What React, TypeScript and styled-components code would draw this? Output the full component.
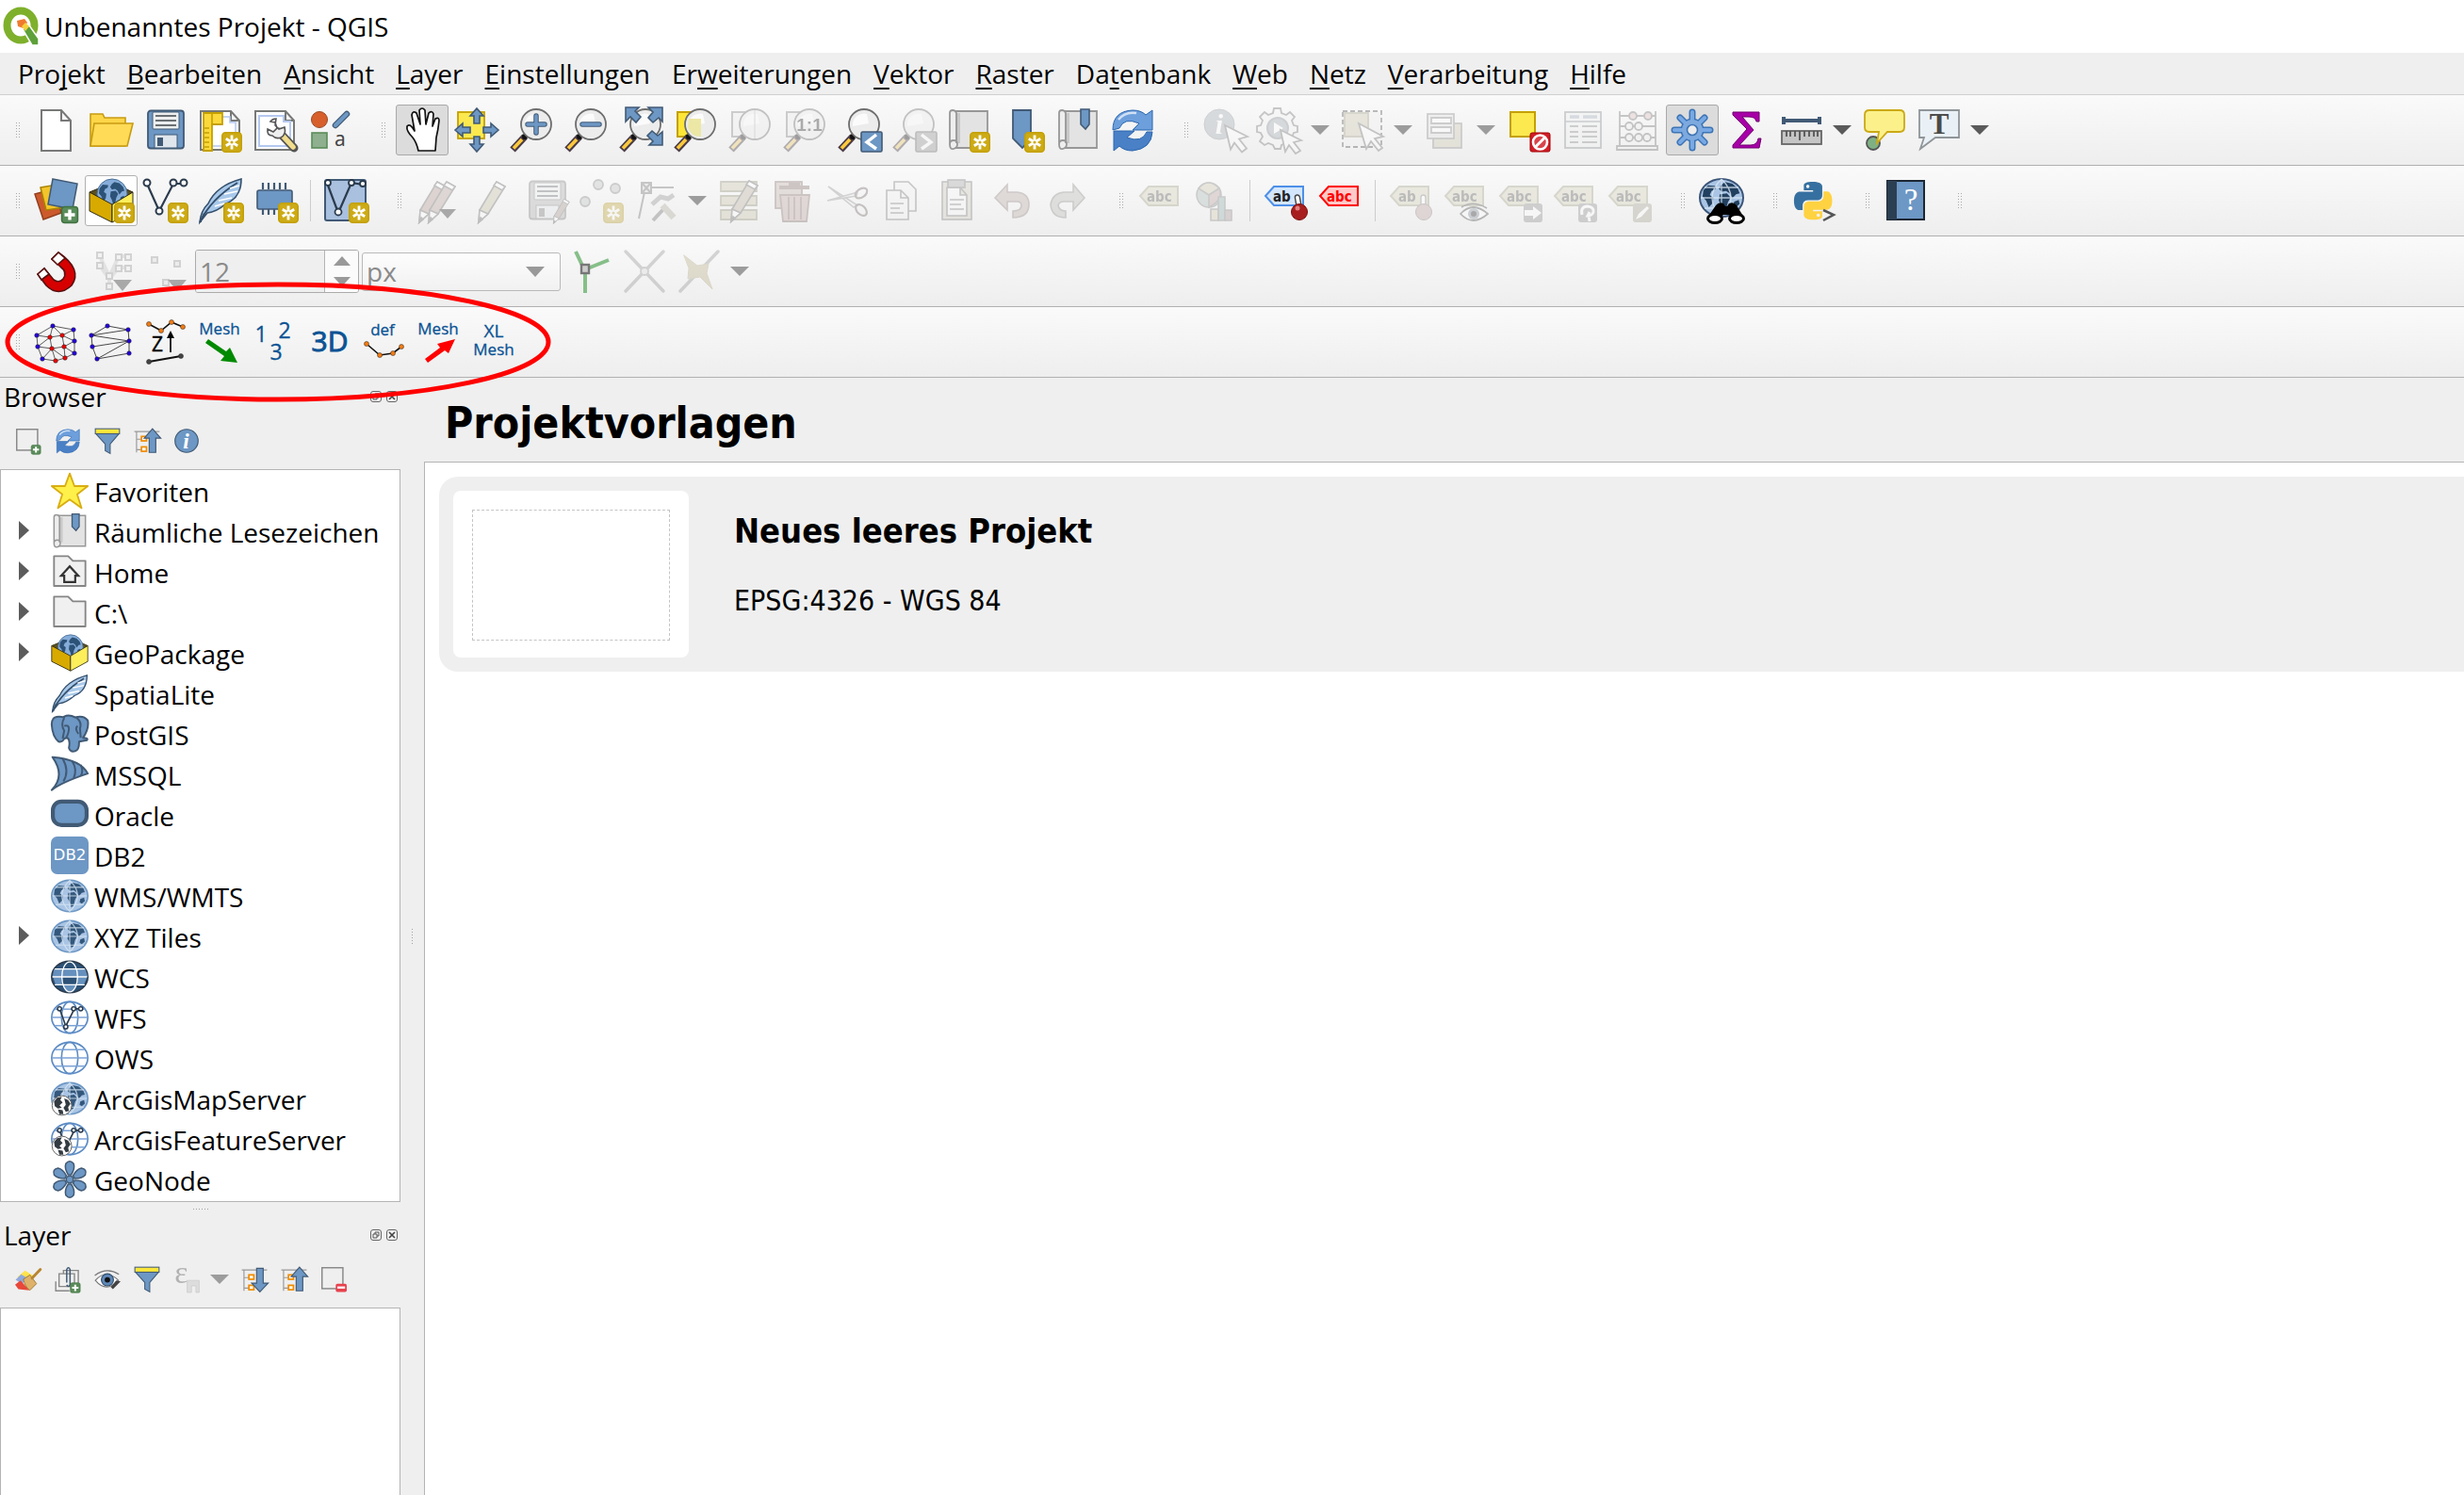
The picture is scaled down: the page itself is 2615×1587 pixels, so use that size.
import React from "react";
import styled, { createGlobalStyle, css } from "styled-components";

const UI_FONT = '"Open Sans", "Noto Sans", sans-serif';
const HEAD_FONT = '"DejaVu Sans Condensed", "DejaVu Sans", sans-serif';

const C = {
  blue: "#6d97c4",
  navy: "#415a75",
  deep: "#2b3b4d",
  gold: "#c4a000",
  panel: "#efefef",
  line: "#b4b4b4",
};

const GlobalStyle = createGlobalStyle`
  * { box-sizing: border-box; }
  body { margin: 0; background: ${C.panel}; color: #000; font-family: ${UI_FONT}; font-size: 28px; }
  button, input, select { font: inherit; color: inherit; }
`;

/* ---------- drawings (48 x 48 grid) ---------- */

const Badge = ({ x = 25, y = 26 }: { x?: number; y?: number }) => (
  <g transform={`translate(${x} ${y})`}>
    <rect x="0.8" y="0.8" width="20.4" height="20.4" rx="3.5" fill="#cdab16" stroke="#c4a000" strokeWidth="1.6" />
    <path d="M11 3.5v15M4.8 7.2l12.4 7.6M17.2 7.2L4.8 14.8" stroke="#fff" strokeWidth="2.8" />
    <circle cx="11" cy="11" r="1.6" fill="#cdab16" />
  </g>
);

const PlusBadge = ({ x = 28, y = 29, s = 18 }: { x?: number; y?: number; s?: number }) => (
  <g transform={`translate(${x} ${y}) scale(${s / 18})`}>
    <rect x="0.5" y="0.5" width="17" height="17" rx="3" fill="#5a8c5a" stroke="#3f7240" />
    <path d="M9 3.5v11M3.5 9h11" stroke="#fff" strokeWidth="3.4" />
  </g>
);

const Lens = ({ children }: { children?: React.ReactNode }) => (
  <g>
    <path d="M4 45L17 31" stroke="#4a3b47" strokeWidth="7.5" />
    <path d="M5 43.5L14 34" stroke="#fcc93c" strokeWidth="3.6" />
    <circle cx="17" cy="31" r="3" fill="#111" />
    <circle cx="29" cy="18" r="16" fill="#ececec" stroke="#6e6e6e" strokeWidth="1.8" />
    <path d="M17 20a12 12 0 0 1 15-13l2 10z" fill="#fff" opacity="0.8" />
    {children}
  </g>
);

const Cursor = () => (
  <path d="M24 19l24 12-9 2.5 8 10-5 4-8-10-4 7z" fill="#fff" stroke="#777" strokeWidth="1.8" />
);

const Sheet = () => (
  <path d="M3 4h32l9 10v31H3zM35 4v10h9" fill="#fff" stroke="#777977" strokeWidth="2" />
);

const TagShape = ({ fill, stroke, text, ink }: { fill: string; stroke: string; text: string; ink: string }) => (
  <g>
    <path d="M3 19l9-10h31v20H12z" fill={fill} stroke={stroke} strokeWidth="2" />
    <text x={text === "ab" ? 11 : 10} y="25" fontFamily="DejaVu Sans Condensed, DejaVu Sans" fontWeight="700" fontSize="15" fill={ink}>
      {text}
    </text>
  </g>
);

const GreyTag = ({ text = "abc" }: { text?: string }) => (
  <TagShape fill="#d8d3b0" stroke="#a9a583" text={text} ink="#5e5e5e" />
);

const Continents = ({ fill = "#2d5277" }: { fill?: string }) => (
  <path
    fill={fill}
    d="M4 15l5-6 9 1-1 4-4 2-2 5 4 3-1 7-4 5-3-8-4-5zM24 8l4-3 8 2 6 6 2 6-4 1-4 5-3-6-4-3-5 1-3-4zM22 20l8-1 4 5-3 6-2 9-3 2-2-7-3-6zM38 29l5-2 1 5-4 4-3-2z"
  />
);

const Globe = ({ dark = false }: { dark?: boolean }) => (
  <g>
    <ellipse cx="24" cy="24" rx="23" ry="20" fill="#a9c4e4" stroke={dark ? "#3b5578" : "#6d97c4"} strokeWidth="2" />
    <g transform="translate(1 3) scale(.96 .86)">
      <Continents fill={dark ? "#22405f" : "#34587c"} />
    </g>
    <path d="M2 24h44M6 13h36M6 35h36M24 4v40M24 4q-20 20 0 40M24 4q20 20 0 40" fill="none" stroke="#dbe8f5" strokeWidth="1.3" opacity="0.8" />
  </g>
);

const WireGlobe = () => (
  <g fill="none" stroke="#5c8bc4" strokeWidth="2">
    <ellipse cx="24" cy="24" rx="23" ry="20" fill="#fff" />
    <ellipse cx="24" cy="24" rx="10.5" ry="20" />
    <path d="M5 13.5h38M1 24h46M5 34.5h38" stroke="#7da3d6" />
  </g>
);

const TinyGlobe = () => (
  <g>
    <circle cx="14" cy="33" r="12.5" fill="#fff" stroke="#666" strokeWidth="1.2" />
    <path d="M4 28l4-5 6-1-2 4 3 3-4 4 3 3-5 1-4-3zM17 24l5 2 3 5-3 4 1 5-4 1-3-5 3-4zM9 38l6 1 1 5-5 0z" fill="#333b42" />
  </g>
);

const VNodes = () => (
  <g>
    <path d="M11 13l8 22 11-22h8" fill="none" stroke={C.deep} strokeWidth="2" />
    <g fill="#fff" stroke={C.deep} strokeWidth="1.8">
      <circle cx="11" cy="13" r="2.6" />
      <circle cx="19" cy="36" r="2.6" />
      <circle cx="29" cy="13" r="2.6" />
      <circle cx="38" cy="13" r="2.6" />
    </g>
  </g>
);

const Pencil = ({ x = 0, y = 0, body = "#c9c39c" }: { x?: number; y?: number; body?: string }) => (
  <g transform={`translate(${x} ${y})`} stroke="#6f6f6f" strokeWidth="1.6">
    <path d="M10 34L28 4l9 5-18 29-10 9z" fill={body} />
    <path d="M28 4l9 5-3 4-9-5zM10 34l9 4-10 9z" fill="#fff" />
    <path d="M11 42l-2 5 4-3z" fill="#555" />
  </g>
);

const Floppy = ({ main = C.blue, edge = C.navy }: { main?: string; edge?: string }) => (
  <g>
    <rect x="5" y="3.5" width="38" height="40" rx="3" fill={main} stroke={edge} strokeWidth="1.8" />
    <rect x="10" y="5" width="28" height="18" rx="1" fill="#eceeef" stroke={edge} />
    <path d="M13 9h22M13 14h22M13 19h22" stroke="#6a6f73" strokeWidth="2" />
    <rect x="12" y="29" width="24" height="14" fill="#dfe6ec" stroke={edge} />
    <rect x="15" y="32" width="6" height="9" fill={edge} />
  </g>
);

const MapScroll = () => (
  <g stroke="#979797" strokeWidth="1.8">
    <path d="M6 4h38v39H8z" fill="#e3e3e3" />
    <path d="M10 6h5v32h-5z" fill="#c8c8c8" stroke="none" />
    <path d="M4 40V6q0-3 3-3t4 3v32M4 39q0-4 4-4t4 4-4 5-4-5z" fill="#eee" />
  </g>
);

const Refresh = () => (
  <g stroke="#2b66ae" strokeWidth="1">
    <path d="M3 24Q3 4 24 3q9 0 14 5l7-5v21H24l7-7Q15 10 10 22z" fill="#6d9fdc" />
    <path d="M45 26q-1 18-21 20-9 0-14-5l-6 5V25h22l-8 7q16 6 21-6z" fill="#4a80c6" />
    <path d="M9 13Q16 4 28 6" stroke="#cfe0f4" strokeWidth="2.5" fill="none" />
  </g>
);

const Arrow4 = () => (
  <g>
    <rect x="4" y="5" width="28" height="28" fill="#fce94f" stroke={C.gold} strokeWidth="1.8" />
    <path
      d="M24 1l7 8h-4v8h-6V9h-4zM24 47l7-8h-4v-8h-6v8h-4zM1 24l8-7v4h8v6H9v4zM47 24l-8-7v4h-8v6h8v4z"
      fill={C.blue}
      stroke={C.navy}
      strokeWidth="1.6"
    />
  </g>
);

const Feather = () => (
  <g>
    <path d="M2 47q1-12 9-20Q20 8 46 1q0 20-16 26-10 9-20 10z" fill="#a9c9ea" stroke="#35506d" strokeWidth="1.6" />
    <path d="M2 47Q14 22 42 5" stroke="#35506d" strokeWidth="2" fill="none" />
    <path d="M18 30l10-3M22 24l14-3M28 17l14-3M34 11l10-3" stroke="#fff" strokeWidth="1.6" />
    <path d="M2 47q2-6 4-10l2 2q-4 3-4 8z" fill="#35506d" />
  </g>
);

const GeoPackage = () => (
  <g stroke="#2d2a14" strokeWidth="1">
    <path d="M1 15L25 5l22 10-22 15z" fill="#5c5020" />
    <circle cx="25" cy="17" r="16" fill="#86add9" stroke="#4a6e98" />
    <g transform="translate(9 1) scale(.66)" stroke="none">
      <Continents />
    </g>
    <path d="M1 15l24 13v19L1 35z" fill="#d8aa00" />
    <path d="M47 15L25 28v19l22-12z" fill="#fdee5c" />
  </g>
);

const Bars = ({ up }: { up: boolean }) => (
  <g>
    <path d="M1 7h46M5 7v38M5 21h12M5 40h12" stroke="#999" strokeWidth="2" fill="none" />
    <rect x="14" y="16" width="9" height="8" fill="#fff" stroke="#f08c00" strokeWidth="3" />
    <rect x="14" y="35" width="9" height="8" fill="#fff" stroke="#f08c00" strokeWidth="3" />
    <path
      d={up ? "M34 2l15 17h-9v26H28V19h-9z" : "M34 47l15-16h-9V4H28v27h-9z"}
      fill={C.blue}
      stroke={C.navy}
      strokeWidth="2"
    />
  </g>
);

const Funnel = () => (
  <g stroke={C.navy} strokeWidth="1.8">
    <path d="M3 11h42L29 30v17l-9-5V30z" fill={C.blue} />
    <rect x="2" y="2" width="44" height="9" fill="#fbe73a" />
  </g>
);

const meshBlue: [number, number][] = [[20, 7], [42, 11], [3, 17], [43, 23], [4, 29], [43, 36], [9, 42]];
const meshRed: [number, number][] = [[17, 19], [30, 17], [19, 31], [32, 29], [23, 44], [33, 41]];

const Dots = ({ pts, fill, r = 2 }: { pts: [number, number][]; fill: string; r?: number }) => (
  <g fill={fill} stroke="#222" strokeWidth="0.5">
    {pts.map(([x, y]) => (
      <circle key={`${x}-${y}`} cx={x} cy={y} r={r} />
    ))}
  </g>
);

const MeshText = ({ x, y, size, children }: { x: number; y: number; size: number; children: string }) => (
  <text x={x} y={y} textAnchor="middle" fontFamily="Open Sans, Noto Sans" fontSize={size} fill="#0b5394" stroke="#0b5394" strokeWidth="0.3">
    {children}
  </text>
);

const Folder = () => (
  <path d="M4 4h18l6 6h16v32H4z" fill="#f0f0f0" stroke="#858585" strokeWidth="2.2" strokeLinejoin="round" />
);

const PYTHON_HALF =
  "M14.25.18l.9.2.73.26.59.3.45.32.34.34.25.34.16.33.1.3.04.26.02.2-.01.13V8.5l-.05.63-.13.55-.21.46-.26.38-.3.31-.33.25-.35.19-.35.14-.33.1-.3.07-.26.04-.21.02H8.77l-.69.05-.59.14-.5.22-.41.27-.33.32-.27.35-.2.36-.15.37-.1.35-.07.32-.04.27-.02.21v3.06H3.17l-.21-.03-.28-.07-.32-.12-.35-.18-.36-.26-.36-.36-.35-.46-.32-.59-.28-.73-.21-.88-.14-1.05-.05-1.23.06-1.22.16-1.04.24-.87.32-.71.36-.57.4-.44.42-.33.42-.24.4-.16.36-.1.32-.05.24-.01h.16l.06.01h8.16v-.83H6.18l-.01-2.75-.02-.37.05-.34.11-.31.17-.28.25-.26.31-.23.38-.2.44-.18.51-.15.58-.12.64-.1.71-.06.77-.04.84-.02 1.27.05zm-6.3 1.98l-.23.33-.08.41.08.41.23.34.33.22.41.09.41-.09.33-.22.23-.34.08-.41-.08-.41-.23-.33-.33-.22-.41-.09-.41.09z";

const icons: Record<string, React.ReactNode> = {
  newFile: <path d="M8 3h21l10 11v32H8zM29 3v11h10" fill="#fff" stroke="#777977" strokeWidth="2" />,
  open: (
    <g fill="#fdd549" stroke="#c79b12" strokeWidth="1.6">
      <path d="M2 7h13l2 4h22v30H2z" />
      <path d="M6 17h41l-6 24H2z" fill="#ffdb57" />
    </g>
  ),
  save: <Floppy />,
  layout: (
    <g>
      <Sheet />
      <path d="M8 10h26v6h6v25H8z" fill="none" stroke="#b4c8ef" strokeWidth="1.5" />
      <path d="M6 6h20v12H15v28H6z" fill="#fbd93c" stroke={C.gold} strokeWidth="1.8" />
      <path d="M7 22h5M7 27h5M7 32h5M7 37h5M7 42h5M15 7v10" stroke={C.gold} strokeWidth="1.6" />
      <Badge />
    </g>
  ),
  layoutManager: (
    <g>
      <Sheet />
      <path d="M7 9h26v6h7v26H7z" fill="none" stroke="#b4c8ef" strokeWidth="2" />
      <path d="M44 43L28 26" stroke="#555" strokeWidth="9" strokeLinecap="round" />
      <path d="M43 42L31 29" stroke="#f0dc8a" strokeWidth="5.5" strokeLinecap="round" />
      <path d="M25 12l-1 7 4 4 6-2q2 8-4 11-5 2-9-2-6 0-5-7l6 3 4-4-2-6-5-1q2-3 6-3z" fill="#eee" stroke="#555" strokeWidth="1.6" />
    </g>
  ),
  style: (
    <g>
      <circle cx="13" cy="13" r="8.5" fill="#d75f2b" stroke="#9a4a24" />
      <path d="M30 19L42 7" stroke={C.navy} strokeWidth="6.5" strokeLinecap="round" />
      <path d="M30 19L42 7" stroke={C.blue} strokeWidth="4" strokeLinecap="round" />
      <rect x="5" y="27" width="16" height="16" fill="#8eb08e" stroke="#5a8c5a" strokeWidth="1.6" />
      <text x="29" y="41" fontFamily="Noto Sans" fontSize="21" fill="#444">a</text>
    </g>
  ),
  pan: (
    <path
      d="M20 46q-2-9-6-14-7-7-6-12 3-4 8 5l-3-17q1-5 5-2l4 12-1-15q3-4 6 0l1 15 3-12q4-3 5 1l-1 13 3-8q4-2 4 2-1 10-3 18l-1 14z"
      fill="#fff"
      stroke="#111"
      strokeWidth="1.7"
      strokeLinejoin="round"
    />
  ),
  panSel: <Arrow4 />,
  zoomIn: (
    <Lens>
      <path d="M29 9v18M20 18h18" stroke={C.navy} strokeWidth="5.5" strokeLinecap="round" />
      <path d="M29 9v18M20 18h18" stroke={C.blue} strokeWidth="3.5" strokeLinecap="round" />
    </Lens>
  ),
  zoomOut: (
    <Lens>
      <path d="M20 18h18" stroke={C.navy} strokeWidth="5.5" strokeLinecap="round" />
      <path d="M20 18h18" stroke={C.blue} strokeWidth="3.5" strokeLinecap="round" />
    </Lens>
  ),
  zoomFull: (
    <Lens>
      <path
        d="M8 0h14l-4 4 6 6-5 6-6-6-5 5zM47 0v15l-4-4-6 5-5-5 5-6-5-5zM47 40H33l4-4-6-6 5-5 6 5 5-4z"
        fill={C.blue}
        stroke={C.navy}
        strokeWidth="1.6"
      />
    </Lens>
  ),
  zoomSel: (
    <g>
      <rect x="5" y="5" width="24" height="26" fill="#ffe636" stroke={C.gold} strokeWidth="2" />
      <Lens><path d="M17 12h13v19q-11 0-14-10z" fill="#ece7a4" /></Lens>
    </g>
  ),
  zoomLayer: (
    <g>
      <rect x="5" y="5" width="24" height="26" fill="#eee" stroke="#888" strokeWidth="2" />
      <Lens><path d="M29 3v30" stroke="#aaa" /></Lens>
    </g>
  ),
  zoomNative: (
    <g>
      <rect x="5" y="5" width="24" height="26" fill="#eee" stroke="#888" strokeWidth="2" />
      <Lens>
        <text x="29" y="25" textAnchor="middle" fontFamily="Liberation Sans" fontWeight="700" fontSize="19" fill="#333">1:1</text>
      </Lens>
    </g>
  ),
  zoomLast: (
    <Lens>
      <rect x="26" y="26" width="22" height="21" rx="1.5" fill={C.blue} stroke={C.navy} strokeWidth="1.6" />
      <path d="M42 29l-10 8 10 7" fill="none" stroke="#fff" strokeWidth="3.4" />
    </Lens>
  ),
  zoomNext: (
    <Lens>
      <rect x="26" y="26" width="22" height="21" rx="1.5" fill="#999" stroke="#666" strokeWidth="1.6" />
      <path d="M32 29l10 8-10 7" fill="none" stroke="#fff" strokeWidth="3.4" />
    </Lens>
  ),
  newMap: <g><MapScroll /><Badge /></g>,
  newBookmark: (
    <g transform="translate(6 0)">
      <path d="M7 3h19v31l-9 9-10-10z" fill={C.blue} stroke={C.navy} strokeWidth="1.8" />
      <Badge x={19} />
    </g>
  ),
  bookmarks: (
    <g>
      <MapScroll />
      <path d="M27 2h9v16l-4 5-5-5z" fill={C.blue} stroke={C.navy} strokeWidth="1.6" />
    </g>
  ),
  refresh: <Refresh />,
  identify: (
    <g>
      <circle cx="18" cy="18" r="16" fill="#a3adb8" stroke="#8a929a" />
      <text x="18" y="28" textAnchor="middle" fontFamily="Liberation Serif" fontStyle="italic" fontWeight="700" fontSize="30" fill="#fff">i</text>
      <Cursor />
    </g>
  ),
  action: (
    <g>
      <path
        d="M18 1h7l1 5 5 2 4-3 5 5-3 4 2 5 4 1v6l-4 1-2 5 3 4-5 4-4-2-5 2-1 4h-6l-2-4-5-2-4 2-5-4 3-5-2-4-4-1v-6l4-1 2-5-3-4 5-5 4 3 5-2z"
        fill="#f5f5f5"
        stroke="#777"
        strokeWidth="1.8"
      />
      <circle cx="22" cy="22" r="11" fill="#a3adb8" stroke="#8a929a" strokeWidth="2" />
      <path d="M18 16l10 6-10 6z" fill="#fff" />
      <path d="M25 24l22 11-8 2 7 9-5 3-7-9-4 7z" fill="#fff" stroke="#777" strokeWidth="1.8" />
    </g>
  ),
  select: (
    <g>
      <rect x="3" y="4" width="41" height="38" fill="#f0f0f0" stroke="#555" strokeWidth="1.8" strokeDasharray="5 3" />
      <rect x="5" y="6" width="25" height="25" fill="#cfc9a8" stroke="#a39d7a" strokeWidth="1.8" />
      <path d="M20 17l26 14-9 2 8 10-4 3-8-10-5 8z" fill="#fff" stroke="#777" strokeWidth="1.8" />
    </g>
  ),
  form: (
    <g stroke="#8c8c8c" strokeWidth="1.8">
      <rect x="11" y="17" width="30" height="26" fill="#cfc9a8" />
      <rect x="5" y="7" width="28" height="26" fill="#e3e3e3" />
      <path d="M9 11h21v6H9zM9 21h21v6H9z" fill="#fff" />
    </g>
  ),
  deselect: (
    <g>
      <rect x="5" y="5" width="26" height="26" fill="#fce94f" stroke={C.gold} strokeWidth="2" />
      <rect x="26" y="27" width="21" height="20" rx="2" fill="#cf1f2a" stroke="#a40000" />
      <circle cx="36.5" cy="37" r="7.5" fill="#d9434b" stroke="#fff" strokeWidth="2.6" />
      <path d="M31.5 42l10-10" stroke="#fff" strokeWidth="3" />
    </g>
  ),
  table: (
    <g>
      <rect x="5" y="5" width="38" height="38" fill="#eef0f2" stroke="#848b91" strokeWidth="1.8" />
      <path d="M5 15h38" stroke="#848b91" strokeWidth="1.6" />
      <path d="M10 10h10M24 10h15" stroke="#9fb0c4" strokeWidth="3.5" />
      <path d="M10 20h9M23 20h16M10 26h9M23 26h16M10 31h9M23 31h16M10 37h9M23 37h16" stroke="#6e6e6e" strokeWidth="1.6" />
    </g>
  ),
  abacus: (
    <g fill="none" stroke="#777" strokeWidth="1.8">
      <path d="M5 4v37M43 4v37M5 9h38M5 20h38M5 32h38M2 41h43v4H2z" />
      <g fill="#f0f0f0">
        <circle cx="19" cy="9" r="4" fill="#e6bcbc" />
        <circle cx="35" cy="9" r="4" fill="#e6bcbc" />
        <circle cx="15" cy="20" r="4" />
        <circle cx="25" cy="20" r="4" />
        <circle cx="15" cy="32" r="4" />
        <circle cx="25" cy="32" r="4" />
        <circle cx="34" cy="32" r="4" />
      </g>
    </g>
  ),
  gear: (
    <g>
      <g stroke="#3d74b5" strokeWidth="7" strokeLinecap="round">
        <path d="M24 5v38M5 24h38M11 11l26 26M37 11L11 37" />
      </g>
      <circle cx="24" cy="24" r="12.5" fill="#3d74b5" />
      <g stroke="#78a9e4" strokeWidth="4" strokeLinecap="round">
        <path d="M24 5v38M5 24h38M11 11l26 26M37 11L11 37" />
      </g>
      <circle cx="24" cy="24" r="11" fill="#7da9de" />
      <circle cx="24" cy="24" r="5.5" fill="#ececec" stroke="#3d74b5" strokeWidth="1.6" />
    </g>
  ),
  sigma: <path d="M9 5h28v10h-3q-1-5-8-5H19l12 14-15 16h12q7 0 8-7h3l-2 10H9v-3l15-17L9 8z" fill="#a800a8" stroke="#6d006d" />,
  measure: (
    <g>
      <path d="M5 14h38M5 10v8M43 10v8" stroke={C.navy} strokeWidth="4" />
      <path d="M4 10v8M44 10v8" stroke={C.navy} strokeWidth="1.5" />
      <rect x="3" y="25" width="42" height="14" fill="#c5c5c5" stroke="#666" strokeWidth="1.8" />
      <path d="M8 25v6M12 25v6M17 25v6M22 25v10M27 25v6M32 25v6M37 25v6M41 25v6" stroke="#555" strokeWidth="1.8" />
    </g>
  ),
  mapTips: (
    <g>
      <circle cx="12" cy="38" r="7" fill="#7fb083" stroke="#555" strokeWidth="1.8" />
      <path d="M8 3h32q5 0 5 5v13q0 5-5 5H27L16 38l2-12H8q-5 0-5-5V8q0-5 5-5z" fill="#fbf08a" stroke="#cba916" strokeWidth="1.8" />
    </g>
  ),
  annotation: (
    <g>
      <path d="M3 3h42v29H20L4 44l4-12H3z" fill="#eaf1f6" stroke="#8f9599" strokeWidth="1.8" />
      <text x="24" y="28" textAnchor="middle" fontFamily="Liberation Serif" fontWeight="700" fontSize="31" fill="#4a4a4a">T</text>
    </g>
  ),
  dataSource: (
    <g strokeWidth="1.5">
      <path d="M1 17l22-6 6 26-19 7z" fill="#cc5a2c" stroke="#93401f" />
      <path d="M7 10l23-4 3 25-20 3z" fill="#f3c52b" stroke="#a98300" />
      <path d="M20 1l26 5-5 27-26-5z" fill={C.blue} stroke={C.navy} />
      <PlusBadge x={29} y={30} />
    </g>
  ),
  newGpkg: <g><GeoPackage /><Badge x={27} /></g>,
  newShape: (
    <g transform="translate(-1 0)">
      <path d="M5 6l13 29L33 6h11" fill="none" stroke={C.deep} strokeWidth="2.2" />
      <g fill="#fff" stroke={C.deep} strokeWidth="2">
        <circle cx="5" cy="5" r="3.5" />
        <circle cx="18" cy="35" r="3.5" />
        <circle cx="33" cy="5" r="3.5" />
        <circle cx="44" cy="5" r="3.5" />
      </g>
      <Badge x={27} />
    </g>
  ),
  newSpatialite: <g><Feather /><Badge x={27} /></g>,
  newMemory: (
    <g>
      <path d="M11 5v7M17 5v7M23 5v7M29 5v7M35 5v7M11 32v7M17 32v7M23 32v7" stroke={C.navy} strokeWidth="2.2" />
      <rect x="5" y="13" width="37" height="20" rx="2" fill={C.blue} stroke={C.navy} strokeWidth="1.6" />
      <Badge x={27} />
    </g>
  ),
  newMesh: (
    <g>
      <rect x="2" y="2" width="43" height="43" rx="2" fill="#a9c0de" stroke={C.navy} strokeWidth="2" />
      <path d="M4 5l12 32L30 5l12 2" fill="none" stroke={C.deep} strokeWidth="2.2" />
      <g fill="#fff" stroke={C.deep} strokeWidth="1.8">
        <circle cx="5" cy="5" r="3" />
        <circle cx="16" cy="36" r="3.5" />
        <circle cx="30" cy="5" r="3" />
        <circle cx="42" cy="6" r="3" />
      </g>
      <Badge x={27} />
    </g>
  ),
  edits: (
    <g>
      <Pencil x={-5} body="#c09c94" />
      <Pencil x={5} body="#c0a49c" />
      <path d="M25 33h18l-9 10z" fill="#333" />
    </g>
  ),
  pencil: <Pencil />,
  saveEdits: (
    <g>
      <Floppy main="#b3b3b3" edge="#808080" />
      <g transform="translate(25 20) scale(.6)"><Pencil body="#b09c90" /></g>
    </g>
  ),
  addFeature: (
    <g>
      <g fill="#c2c4c4" stroke="#888" strokeWidth="1.8">
        <circle cx="20" cy="7" r="5" />
        <circle cx="38" cy="11" r="5" />
        <circle cx="6" cy="25" r="5" />
      </g>
      <Badge />
    </g>
  ),
  vertex: (
    <g stroke="#777" strokeWidth="2" fill="none">
      <path d="M12 10h30M12 10L5 43" />
      <rect x="8" y="5" width="10" height="11" fill="#ddd" />
      <path d="M9 6l8 9M17 6l-8 9" />
      <path d="M20 45l13-14" strokeWidth="4" />
      <path d="M42 42L30 29" strokeWidth="7" stroke="#b5b09a" />
      <path d="M19 28l9-8 8 2 6-4" strokeWidth="5" stroke="#999" />
    </g>
  ),
  multiEdit: (
    <g>
      <path d="M4 4h38v10H4zM4 19h38v10H4zM4 34h38v10H4z" fill="#cfcaa4" stroke="#999577" strokeWidth="1.8" />
      <Pencil x={6} y={-1} body="#c3b49c" />
    </g>
  ),
  trash: (
    <g fill="#c7a8a3" stroke="#917470" strokeWidth="1.8">
      <rect x="4" y="4" width="28" height="28" fill="#c9b6ab" />
      <path d="M8 10h32M18 7h12" strokeWidth="4" />
      <path d="M9 18h31l-3 28H12zM18 20v24M24 20v24M31 20v24" />
    </g>
  ),
  cut: (
    <g fill="none" stroke="#7f6f6c" strokeWidth="2.2">
      <path d="M2 9l31 20-4 2z" fill="#eee" stroke="#999" strokeWidth="1.5" />
      <path d="M1 24l31-5 1-4z" fill="#eee" stroke="#999" strokeWidth="1.5" />
      <ellipse cx="37" cy="16" rx="7" ry="4.5" transform="rotate(-35 37 16)" />
      <ellipse cx="37" cy="34" rx="7" ry="4.5" transform="rotate(45 37 34)" />
    </g>
  ),
  copy: (
    <g fill="#f3f3f3" stroke="#777" strokeWidth="1.6">
      <path d="M14 4h15l8 8v23H14z" />
      <path d="M6 13h15l8 8v23H6zM21 13v8h8M10 27h14M10 32h10M10 37h14" />
    </g>
  ),
  paste: (
    <g stroke="#777" strokeWidth="1.6">
      <rect x="7" y="4" width="31" height="40" fill="#cfccb8" />
      <path d="M12 10h14l7 8v22H12zM26 10v8h7M15 23h15M15 28h12M15 33h15" fill="#f6f6f6" />
      <rect x="13" y="2" width="18" height="8" fill="#aaa" />
    </g>
  ),
  undo: <path d="M5 21L18 7v8h10q13 1 13 13 0 14-17 14v-7q9 0 9-6 0-4-5-4H18v9z" fill="#c2aea6" stroke="#958480" strokeWidth="1.6" />,
  redo: <path d="M42 21L30 7v8H20Q8 16 6 28q1 14 16 14v-7q-7 0-8-6 1-4 6-4h10v9z" fill="#bcbcb6" stroke="#8a8f88" strokeWidth="1.6" />,
  label: <GreyTag />,
  diagram: (
    <g stroke="#878787" strokeWidth="1.6">
      <circle cx="18" cy="18" r="13" fill="#a9c0ba" />
      <path d="M18 18L7 11q10-12 22 0z" fill="#d2cca6" />
      <path d="M18 18l11-7q5 12-11 20z" fill="#c9a3a3" />
      <path d="M20 33h8v12h-8z" fill="#d8cfa6" />
      <path d="M28 20h7v25h-7z" fill="#8fb3b0" />
      <path d="M35 34h7v11h-7z" fill="#b79aa0" />
    </g>
  ),
  labelPin: (
    <g>
      <TagShape fill="#d3e6fb" stroke="#4d8fe8" text="ab" ink="#222" />
      <rect x="35" y="18" width="5" height="13" rx="2.5" fill="#fff" stroke="#444" strokeWidth="1.4" transform="rotate(-10 37 24)" />
      <circle cx="39" cy="36" r="8.5" fill="#a81e1e" stroke="#7d1010" />
      <circle cx="37" cy="32" r="2.5" fill="#e08080" />
    </g>
  ),
  labelRed: <TagShape fill="#ffc9c9" stroke="#f00" text="abc" ink="#f00" />,
  pin: (
    <g>
      <GreyTag text="ab" />
      <rect x="35" y="18" width="5" height="13" rx="2.5" fill="#fff" stroke="#888" strokeWidth="1.4" />
      <circle cx="38" cy="36" r="8.5" fill="#c9a5a5" stroke="#917777" />
    </g>
  ),
  eyeTag: (
    <g>
      <GreyTag />
      <path d="M19 38q13-14 29 0-16 14-29 0z" fill="#fff" stroke="#555" strokeWidth="1.7" />
      <path d="M20 31q12-8 27 1" stroke="#555" fill="none" strokeWidth="1.6" />
      <circle cx="33" cy="38" r="6" fill="#8796a8" />
      <circle cx="33" cy="38" r="3" fill="#333" />
    </g>
  ),
  moveTag: (
    <g>
      <GreyTag />
      <rect x="28" y="27" width="20" height="20" rx="3" fill="#949494" />
      <path d="M29 34h9v-4l9 7-9 7v-4h-9z" fill="#fff" />
    </g>
  ),
  rotateTag: (
    <g>
      <GreyTag />
      <rect x="28" y="27" width="20" height="20" rx="3" fill="#949494" />
      <path d="M32 39q-2-9 6-9 7 1 6 6-1 4-6 4l2-4M39 40l1 6" fill="none" stroke="#fff" strokeWidth="3" />
    </g>
  ),
  editTag: (
    <g>
      <GreyTag />
      <rect x="28" y="27" width="20" height="20" rx="3" fill="#a9a68e" />
      <path d="M31 44l3-6 9-8 2 2-8 9z" fill="#fff" />
    </g>
  ),
  metasearch: (
    <g>
      <g transform="translate(0 -3)"><Globe dark /></g>
      <path d="M9 42l9-13q3-4 8-2l2 3h2l2-3q5-2 8 2l8 13-8 5-8-8h-6l-8 8z" fill="#000" />
      <ellipse cx="17" cy="43" rx="7.5" ry="4.5" fill="#fff" stroke="#000" strokeWidth="3" />
      <ellipse cx="40" cy="43" rx="7.5" ry="4.5" fill="#fff" stroke="#000" strokeWidth="3" />
    </g>
  ),
  python: (
    <g>
      <g transform="translate(3 4) scale(1.68)">
        <path fill="#3670a0" d={PYTHON_HALF} />
        <path fill="#ffd242" transform="rotate(180 12 12)" d={PYTHON_HALF} />
      </g>
      <path d="M34 34l11 5-11 6" fill="none" stroke="#555" strokeWidth="2.5" />
    </g>
  ),
  help: (
    <g>
      <rect x="4" y="3" width="39" height="41" fill={C.blue} stroke="#1c2733" strokeWidth="2" />
      <rect x="4" y="3" width="10" height="41" fill="#2b3f52" />
      <text x="29" y="34" textAnchor="middle" fontFamily="Liberation Serif" fontSize="33" fill="#fff">?</text>
    </g>
  ),
  magnet: (
    <g stroke="#5a1010" strokeWidth="1.6">
      <path d="M26 4q26 18 14 35-14 13-27 0L4 27l7-6 10 12q6 4 10-1 5-7-3-13l-9-8z" fill="#d60000" />
      <path d="M26 4l-7 7 6 6 8-7zM4 27l7-6 5 6-8 6z" fill="#fff" />
    </g>
  ),
  snapMode: (
    <g fill="none" stroke="#999" strokeWidth="2">
      <path d="M12 8l10 22v12M22 30L32 8h8M12 18l10 14 10-12h8" strokeWidth="4" stroke="#c4c4c4" />
      <path d="M9 4h6v6H9zM29 6h6v6h-6zM39 6h6v6h-6zM9 15h6v6H9zM29 18h6v6h-6zM39 18h6v6h-6zM19 26h6v6h-6zM19 37h6v6h-6z" fill="#eee" />
      <path d="M26 33h20l-10 12z" fill="#333" stroke="none" />
    </g>
  ),
  snapVertex: (
    <g fill="#ddd" stroke="#999" strokeWidth="2">
      <path d="M9 9h6v6H9zM33 13h6v6h-6zM21 33h6v6h-6z" />
      <path d="M26 33h20l-10 12z" fill="#333" stroke="none" />
    </g>
  ),
  topo: (
    <g stroke="#86bf88" strokeWidth="4" strokeLinecap="butt">
      <path d="M19 22v25M18 22L9 3M19 22l25-10" />
      <rect x="15" y="17" width="8" height="9" fill="#ccc" stroke="#777" strokeWidth="2.4" />
    </g>
  ),
  snapCross: (
    <g stroke="#999" strokeWidth="3.5" strokeLinecap="round">
      <path d="M4 3l40 42M44 3L4 45" />
      <circle cx="24" cy="24" r="4" fill="#ddd" strokeWidth="1.8" />
    </g>
  ),
  tracing: (
    <g stroke="#999" strokeLinecap="round">
      <path d="M44 3L4 45" strokeWidth="3.5" />
      <path d="M8 7l14 11 12-2-2 10 6 17-13-13-13 2 1-11z" fill="#c3b47c" stroke="#b5a878" />
    </g>
  ),
  mesh1: (
    <g>
      <path
        d="M20 7l22 4 1 12v13l-10 5-10 3-14-2-5-13-1-12zM20 7l-3 12 13-2 12-6M20 7l10 10 13 6M3 17l14 2 2 12 13-2 11-6M4 29l15 2 4 13M4 29l13-10M19 31l-10 11M32 29l11 7M32 29l1 12M19 31l14 10M30 17l2 12"
        fill="none"
        stroke="#333"
        strokeWidth="0.8"
      />
      <Dots pts={meshBlue} fill="#2200e0" r={2.3} />
      <Dots pts={meshRed} fill="#f00000" r={2.3} />
    </g>
  ),
  mesh2: (
    <g>
      <path d="M20 7l22 4 1 12v13L9 42 4 29 3 17zM3 17l39-6M3 17l40 6M4 29l39-6M9 42l34-19" fill="none" stroke="#333" strokeWidth="0.9" />
      <Dots pts={meshBlue} fill="#2200e0" r={2.3} />
    </g>
  ),
  mesh3: (
    <g>
      <path d="M6 5l13 7L30 3l12 5" fill="none" stroke="#111" strokeWidth="1.6" />
      <Dots pts={[[6, 5], [19, 12], [30, 3], [42, 8]]} fill="#f47c12" r={2.5} />
      <text x="9" y="34" fontFamily="Open Sans, Noto Sans" fontSize="21" stroke="#000" strokeWidth="0.4">Z</text>
      <path d="M29 35V17" stroke="#111" strokeWidth="1.8" />
      <path d="M29 12l4 8h-8z" />
      <path d="M6 45l34-6" stroke="#111" strokeWidth="1.8" />
      <Dots pts={[[6, 45], [40, 39]]} fill="#444" r={2.5} />
    </g>
  ),
  mesh4: (
    <g>
      <MeshText x={23} y={16} size={17}>Mesh</MeshText>
      <path d="M8 25l3-4 19 13 4-4 8 16-18-2 4-5z" fill="#008a00" />
    </g>
  ),
  mesh5: (
    <g>
      <MeshText x={9} y={24} size={23}>1</MeshText>
      <MeshText x={34} y={20} size={23}>2</MeshText>
      <MeshText x={25} y={43} size={23}>3</MeshText>
    </g>
  ),
  mesh6: (
    <text x="24" y="34" textAnchor="middle" fontFamily="Open Sans, Noto Sans" fontSize="30" fill="#0b5394" stroke="#0b5394" strokeWidth="1">
      3D
    </text>
  ),
  mesh7: (
    <g>
      <MeshText x={22} y={17} size={17}>def</MeshText>
      <path d="M5 26l14 12 14-2 9-7" fill="none" stroke="#111" strokeWidth="1.6" />
      <Dots pts={[[5, 26], [19, 38], [33, 36], [42, 29]]} fill="#f47c12" r={2.5} />
    </g>
  ),
  mesh8: (
    <g>
      <MeshText x={23} y={16} size={17}>Mesh</MeshText>
      <path d="M12 46l-3-4 16-12-3-4 19-5-7 15-4-3z" fill="#f00" />
    </g>
  ),
  mesh9: (
    <g>
      <MeshText x={24} y={19} size={19}>XL</MeshText>
      <MeshText x={24} y={38} size={17}>Mesh</MeshText>
    </g>
  ),
  addItem: (
    <g>
      <rect x="3" y="3" width="38" height="38" fill="none" stroke="#888" strokeWidth="2.5" />
      <PlusBadge x={29} y={31} s={18} />
    </g>
  ),
  removeItem: (
    <g>
      <rect x="3" y="3" width="38" height="38" fill="none" stroke="#888" strokeWidth="2.5" />
      <rect x="28" y="32" width="20" height="15" rx="3" fill="#e8424e" />
      <path d="M31 39h14" stroke="#fff" strokeWidth="4" />
    </g>
  ),
  filter: <Funnel />,
  collapse: <Bars up />,
  expand: <Bars up={false} />,
  info: (
    <g>
      <circle cx="24" cy="24" r="21" fill={C.blue} stroke={C.navy} strokeWidth="2" />
      <text x="23" y="38" textAnchor="middle" fontFamily="Liberation Serif" fontStyle="italic" fontWeight="700" fontSize="40" fill="#fff">i</text>
    </g>
  ),
  styling: (
    <g>
      <path d="M4 20l14-12 16 10-10 8z" fill="#ffe34a" />
      <path d="M1 25l10-10 10 6-8 12z" fill="#8fa9dd" />
      <path d="M0 34l10-8 16 18-20-2z" fill="#e8483a" />
      <path d="M15 24l12-8 12 16-12 12q-9-6-12-20z" fill="#deb26a" stroke="#9c7433" strokeWidth="1.5" />
      <path d="M31 22L46 6" stroke="#b8862f" strokeWidth="5" strokeLinecap="round" />
    </g>
  ),
  addGroup: (
    <g>
      <path d="M2 28v17h25M8 14v23h28V14zM16 14V8h27v24h-7" fill="none" stroke="#888" strokeWidth="2.4" />
      <path d="M22 30V6q3-6 6 0v28q-3 6-6 0" fill="none" stroke={C.navy} strokeWidth="2.6" />
      <PlusBadge x={28} y={30} s={19} />
    </g>
  ),
  eye: (
    <g>
      <path d="M2 26q20-22 42 0-22 24-42 0z" fill="#fff" stroke="#777" strokeWidth="2" />
      <path d="M1 17q22-16 44-2" fill="none" stroke="#777" strokeWidth="2" />
      <circle cx="24" cy="25" r="11" fill="#5f88b8" stroke="#32506f" strokeWidth="2" />
      <circle cx="24" cy="25" r="5" fill="#111" />
      <path d="M30 38l10-12 8 2-14 14z" fill="#444" />
    </g>
  ),
  exprFilter: (
    <g>
      <text x="2" y="30" fontFamily="Liberation Serif" fontSize="58" fill="#777">ε</text>
      <path d="M25 26h22v22h-6V36h-8v12h-8z" fill="#ccc" stroke="#999" />
    </g>
  ),
  star: (
    <path
      d="M24 2l6 16h17L33.500 28.500 39 46 24 35 9 46l5.500-17.500L1 18h17z"
      fill="#fff04a"
      stroke="#d9ad12"
      strokeWidth="2.2"
      strokeLinejoin="round"
    />
  ),
  home: (
    <g>
      <Folder />
      <path d="M13 29l11-12 11 12h-4v8H17v-8z" fill="none" stroke="#333" strokeWidth="2.6" />
    </g>
  ),
  drive: <Folder />,
  geopackage: <GeoPackage />,
  spatialite: <Feather />,
  postgis: (
    <g fill={C.blue} stroke={C.navy} strokeWidth="2.4" strokeLinejoin="round">
      <path d="M17 3Q1-1 1 12q1 16 9 22 5 1 7-4l4-1q4 3 2 13 2 6 8 4 5-1 5-12l10-2q2-3-5-3 8-12 6-22-5-7-16-4-8-4-14-1z" />
      <path d="M17 4q-5 8 0 16l-2 10M32 3q8 6 5 14l1 12M17 14q6-2 6 4-1 8-4 11M34 14q-4 3 1 10" fill="none" />
    </g>
  ),
  mssql: (
    <g fill={C.blue} stroke={C.navy} strokeWidth="2.4" strokeLinejoin="round">
      <path d="M2 2q36 3 45 21Q14 34 1 44q18-18 1-42z" />
      <path d="M15 4q9 16 1 29M27 7q7 11 2 22M38 12q4 8 0 14" fill="none" />
    </g>
  ),
  oracle: <rect x="2.5" y="7" width="43" height="30" rx="11" fill={C.blue} stroke={C.navy} strokeWidth="5" />,
  db2: (
    <g>
      <rect x="0" y="0" width="48" height="48" rx="8" fill={C.blue} />
      <text x="24" y="30" textAnchor="middle" fontFamily="DejaVu Sans" fontSize="20" fill="#fff">DB2</text>
    </g>
  ),
  wms: <Globe />,
  wcs: (
    <g>
      <ellipse cx="24" cy="24" rx="23" ry="20" fill="#2d5277" stroke={C.deep} strokeWidth="2" />
      <path d="M4 14h10v10H2zM34 14h10l3 10H34zM14 14h20v10H14zM14 34h20l-6 9h-8zM3 25h11v9H6zM34 25h12l-4 9h-8z" fill={C.blue} opacity="0.9" />
      <path d="M5 14h38M2 24h44M5 34h38" stroke="#fff" strokeWidth="1.6" />
      <ellipse cx="24" cy="24" rx="10" ry="19" fill="none" stroke="#fff" strokeWidth="1.6" />
    </g>
  ),
  wfs: <g><WireGlobe /><VNodes /></g>,
  ows: <WireGlobe />,
  arcMap: <g><Globe /><TinyGlobe /></g>,
  arcFeature: <g><WireGlobe /><VNodes /><TinyGlobe /></g>,
  geonode: (
    <g fill={C.blue} stroke={C.navy} strokeWidth="1.8">
      {[0, 60, 120, 180, 240, 300].map((a) => (
        <path key={a} d="M22 18q-5-8-3-14 5-6 10 0 2 6-3 14z" transform={`rotate(${a} 24 24)`} />
      ))}
      <circle cx="24" cy="24" r="4.5" />
    </g>
  ),
};

/* ---------- styled parts ---------- */

const Window = styled.div`
  position: relative;
  display: flex;
  flex-direction: column;
  height: 100vh;
  min-height: 1200px;
  overflow: hidden;
`;

const TitleBar = styled.header`
  display: flex;
  align-items: center;
  gap: 5px;
  height: 56px;
  padding: 0 2px;
  background: #fff;
  white-space: nowrap;
`;

const Logo = styled.svg`
  width: 40px;
  height: 44px;
`;

const WindowTitle = styled.h1`
  margin: 0;
  font-size: 28px;
  font-weight: 400;
  line-height: 58px;
`;

const MenuBar = styled.nav`
  display: flex;
  gap: 23px;
  height: 45px;
  padding: 0 19px;
  border-bottom: 1px solid #cfcfcf;
  white-space: nowrap;
`;

const MenuItem = styled.button`
  padding: 0;
  border: 0;
  background: none;
  line-height: 44px;
  u {
    text-decoration-thickness: 2px;
    text-underline-offset: 4px;
    text-decoration-skip-ink: none;
  }
`;

const Bar = styled.div`
  display: flex;
  align-items: center;
  gap: 20px;
  height: 75px;
  padding-left: 11px;
  background: linear-gradient(#fafafa, #eeeeee);
  border-bottom: 1px solid #b0b0b0;
`;

const Group = styled.div`
  display: flex;
  align-items: center;
`;

const Grip = styled.span`
  width: 20px;
  height: 18px;
  padding: 0 9px 0 5px;
  background: radial-gradient(circle, #a8a8a8 0.8px, transparent 1px) 0 0 / 3px 3px content-box;
`;

const ToolButton = styled.button<{ $look?: "pressed" | "framed" }>`
  display: flex;
  align-items: center;
  justify-content: center;
  width: 56px;
  height: 54px;
  margin: 0 1px;
  padding: 0;
  border: 1px solid transparent;
  border-radius: 3px;
  background: none;
  ${(p) => p.$look === "pressed" && css`background: #dcdcdc; border-color: #a9a9a9;`}
  ${(p) => p.$look === "framed" && css`background: #fff; border-color: #b0b0b0;`}
  &:disabled svg {
    opacity: 0.38;
    filter: grayscale(0.3);
  }
`;

const IconSvg = styled.svg<{ $size: number }>`
  flex: none;
  width: ${(p) => p.$size}px;
  height: ${(p) => p.$size}px;
  overflow: visible;
`;

const DropButton = styled.button<{ $dim?: boolean }>`
  width: 30px;
  height: 54px;
  padding: 0 2px 0 0;
  border: 0;
  background: none;
  display: flex;
  align-items: center;
  justify-content: center;
  &::after {
    content: "";
    border: 10px solid transparent;
    border-top-color: ${(p) => (p.$dim ? "#9c9c9c" : "#5a5a5a")};
    border-bottom: 0;
  }
`;

const Separator = styled.span`
  width: 1px;
  height: 44px;
  margin: 0 8px;
  background: #cdcdcd;
`;

const SpinBox = styled.div`
  display: flex;
  width: 174px;
  height: 46px;
  margin: 0 2px;
  border: 1px solid #ababab;
  border-radius: 3px;
  overflow: hidden;
  color: #8a8a8a;
`;

const SpinInput = styled.input`
  flex: 1;
  min-width: 0;
  padding: 0 4px;
  border: 0;
  border-right: 1px solid #b4b4b4;
  background: #efefef;
`;

const SpinButtons = styled.div`
  display: flex;
  flex-direction: column;
  width: 35px;
  background: #fbfbfb;
`;

const SpinButton = styled.button<{ $up?: boolean }>`
  flex: 1;
  display: flex;
  align-items: center;
  justify-content: center;
  padding: 0;
  border: 0;
  background: none;
  &::after {
    content: "";
    border: 9px solid transparent;
    ${(p) => (p.$up ? "border-bottom: 10px solid #999; border-top: 0;" : "border-top: 10px solid #999; border-bottom: 0;")}
  }
`;

const Combo = styled.div`
  display: flex;
  align-items: center;
  width: 211px;
  height: 41px;
  margin: 0 2px 0 1px;
  border: 1px solid #b9b9b9;
  border-radius: 3px;
  background: linear-gradient(#fdfdfd, #f1f1f1);
`;

const ComboSelect = styled.select`
  flex: 1;
  width: 100%;
  height: 39px;
  padding: 0 4px;
  border: 0;
  background: none;
  color: #8a8a8a;
  appearance: none;
`;

const ComboArrow = styled.span`
  border: 10px solid transparent;
  border-top: 11px solid #999;
  border-bottom: 0;
  margin-right: 16px;
`;

const Workspace = styled.div`
  display: flex;
  flex: 1;
  min-height: 0;
`;

const Docks = styled.aside`
  display: flex;
  flex-direction: column;
  flex: none;
  width: 425px;
  min-height: 0;
`;

const DockHead = styled.div`
  display: flex;
  align-items: center;
  gap: 5px;
  height: 44px;
  padding: 0 3px 4px 4px;
`;

const DockTitle = styled.h2`
  flex: 1;
  margin: 0;
  font-size: 28px;
  font-weight: 400;
  line-height: 40px;
`;

const DockButton = styled.button`
  display: flex;
  width: 12px;
  height: 12px;
  padding: 0;
  border: 1px solid #666;
  border-radius: 3px;
  background: none;
  svg { width: 10px; height: 10px; }
`;

const DockBar = styled.div`
  display: flex;
  align-items: center;
  height: 53px;
  padding: 0 9px 7px;
`;

const SmallTool = styled.button`
  display: flex;
  align-items: center;
  justify-content: center;
  width: 42px;
  height: 42px;
  padding: 0;
  border: 0;
  background: none;
  &:disabled svg { opacity: 0.5; }
`;

const TreeBox = styled.ul<{ $fill?: boolean }>`
  margin: 0;
  padding: 0 0 2px;
  list-style: none;
  background: #fff;
  border: 1px solid ${C.line};
  ${(p) => p.$fill && css`flex: 1; border-bottom: 0;`}
`;

const TreeRow = styled.li`
  display: flex;
  align-items: center;
  height: 43px;
  white-space: nowrap;
`;

const Twisty = styled.button<{ $shown?: boolean }>`
  width: 53px;
  height: 43px;
  padding: 0 0 2px 19px;
  border: 0;
  background: none;
  visibility: ${(p) => (p.$shown ? "visible" : "hidden")};
  display: flex;
  align-items: center;
  &::after {
    content: "";
    border: 10px solid transparent;
    border-left: 11px solid #5c5c5c;
    border-right: 0;
  }
`;

const TreeLabel = styled.span`
  padding: 3px 0 0 6px;
  line-height: 40px;
`;

const HSplit = styled.div`
  display: flex;
  align-items: center;
  justify-content: center;
  height: 15px;
  &::after {
    content: "";
    width: 18px;
    height: 3px;
    background: radial-gradient(circle, #a0a0a0 0.8px, transparent 1px) 0 0 / 3px 3px;
  }
`;

const VSplit = styled.div`
  display: flex;
  align-items: center;
  justify-content: center;
  width: 25px;
  &::after {
    content: "";
    width: 3px;
    height: 18px;
    background: radial-gradient(circle, #a0a0a0 0.8px, transparent 1px) 0 0 / 3px 3px;
  }
`;

const Main = styled.main`
  display: flex;
  flex: 1;
  flex-direction: column;
  min-width: 0;
  font-family: ${HEAD_FONT};
`;

const PageTitle = styled.h2`
  height: 89px;
  margin: 0;
  padding-left: 22px;
  font-size: 46px;
  font-weight: 700;
  line-height: 96px;
`;

const Templates = styled.section`
  flex: 1;
  padding: 15px 0 0 15px;
  background: #fff;
  border: solid ${C.line};
  border-width: 1px 0 0 1px;
`;

const Card = styled.article`
  display: flex;
  gap: 48px;
  padding: 15px;
  border-radius: 20px 0 0 20px;
  background: ${C.panel};
`;

const Thumb = styled.div`
  width: 250px;
  height: 177px;
  padding: 20px;
  border-radius: 8px;
  background: #fff;
  &::after {
    content: "";
    display: block;
    height: 100%;
    border: 1px dashed #c4c4c4;
  }
`;

const CardText = styled.div`
  padding: 21px 0 0;
`;

const CardTitle = styled.h3`
  margin: 0 0 32px;
  font-size: 36px;
  font-weight: 700;
  line-height: 44px;
`;

const CardSub = styled.p`
  margin: 0;
  font-size: 30px;
  line-height: 40px;
`;

const Marker = styled.svg`
  position: absolute;
  left: 4px;
  top: 299px;
  width: 583px;
  height: 128px;
  pointer-events: none;
`;

/* ---------- data ---------- */

type Tool = { icon: string; label: string; off?: boolean; drop?: boolean; look?: "pressed" | "framed" } | "sep";

const t = (icon: string, label: string, extra: object = {}): Tool => ({ icon, label, ...extra });
const off = { off: true };

const projectBar: Tool[][] = [
  [t("newFile", "Neues Projekt"), t("open", "Öffnen"), t("save", "Speichern"), t("layout", "Neues Layout"), t("layoutManager", "Layoutmanager"), t("style", "Stilmanager")],
  [
    t("pan", "Karte verschieben", { look: "pressed" }), t("panSel", "Zur Auswahl verschieben"), t("zoomIn", "Hineinzoomen"), t("zoomOut", "Hinauszoomen"),
    t("zoomFull", "Volle Ausdehnung"), t("zoomSel", "Auf Auswahl zoomen"), t("zoomLayer", "Auf Layer zoomen", off), t("zoomNative", "Native Auflösung", off),
    t("zoomLast", "Zoom zurück"), t("zoomNext", "Zoom vor", off), t("newMap", "Neue Kartenansicht"), t("newBookmark", "Neues Lesezeichen"),
    t("bookmarks", "Lesezeichen"), t("refresh", "Aktualisieren"),
  ],
  [
    t("identify", "Objekte abfragen", off), t("action", "Aktion", { off: true, drop: true }), t("select", "Objekte wählen", { off: true, drop: true }),
    t("form", "Nach Wert wählen", { off: true, drop: true }), t("deselect", "Auswahl aufheben"), t("table", "Attributtabelle", off), t("abacus", "Feldrechner", off),
    t("gear", "Werkzeugkiste", { look: "pressed" }), t("sigma", "Statistik"), t("measure", "Messen", { drop: true }), t("mapTips", "Kartenhinweise"),
    t("annotation", "Textanmerkung", { drop: true }),
  ],
];

const layerBar: Tool[][] = [
  [
    t("dataSource", "Datenquellen"), t("newGpkg", "Neuer GeoPackage-Layer", { look: "framed" }), t("newShape", "Neuer Shapedatei-Layer"),
    t("newSpatialite", "Neuer SpatiaLite-Layer"), t("newMemory", "Neuer Temporärlayer"), "sep", t("newMesh", "Neuer virtueller Layer"),
  ],
  [
    t("edits", "Aktuelle Änderungen", off), t("pencil", "Bearbeitungsmodus", off), t("saveEdits", "Änderungen speichern", off), t("addFeature", "Objekt hinzufügen", off),
    t("vertex", "Stützpunktwerkzeug", { off: true, drop: true }), t("multiEdit", "Attribute ändern", off), t("trash", "Löschen", off), t("cut", "Ausschneiden", off),
    t("copy", "Kopieren", off), t("paste", "Einfügen", off), t("undo", "Rückgängig", off), t("redo", "Wiederholen", off),
  ],
  [
    t("label", "Beschriftung", off), t("diagram", "Diagramm", off), "sep", t("labelPin", "Fixierte Beschriftungen"), t("labelRed", "Nicht platzierte Beschriftungen"), "sep",
    t("pin", "Fixieren", off), t("eyeTag", "Anzeigen", off), t("moveTag", "Verschieben", off), t("rotateTag", "Drehen", off), t("editTag", "Ändern", off),
  ],
  [t("metasearch", "MetaSearch")],
  [t("python", "Python-Konsole")],
  [t("help", "Hilfe")],
  [],
];

const meshTools = ["mesh1", "mesh2", "mesh3", "mesh4", "mesh5", "mesh6", "mesh7", "mesh8", "mesh9"];

const menus: [string, string, string][] = [
  ["Pro", "j", "ekt"], ["", "B", "earbeiten"], ["", "A", "nsicht"], ["", "L", "ayer"], ["", "E", "instellungen"], ["Er", "w", "eiterungen"],
  ["", "V", "ektor"], ["", "R", "aster"], ["Da", "t", "enbank"], ["", "W", "eb"], ["", "N", "etz"], ["", "V", "erarbeitung"], ["", "H", "ilfe"],
];

const tree: [string, string, boolean?][] = [
  ["star", "Favoriten"], ["bookmarks", "Räumliche Lesezeichen", true], ["home", "Home", true], ["drive", "C:\\", true], ["geopackage", "GeoPackage", true],
  ["spatialite", "SpatiaLite"], ["postgis", "PostGIS"], ["mssql", "MSSQL"], ["oracle", "Oracle"], ["db2", "DB2"], ["wms", "WMS/WMTS"], ["wms", "XYZ Tiles", true],
  ["wcs", "WCS"], ["wfs", "WFS"], ["ows", "OWS"], ["arcMap", "ArcGisMapServer"], ["arcFeature", "ArcGisFeatureServer"], ["geonode", "GeoNode"],
];

/* ---------- composed parts ---------- */

const Icon = ({ name, size = 48 }: { name: string; size?: number }) => (
  <IconSvg $size={size} viewBox="0 0 48 48" aria-hidden="true">
    {icons[name]}
  </IconSvg>
);

const ToolGroup = ({ tools }: { tools: Tool[] }) => (
  <Group>
    <Grip />
    {tools.map((tool, i) =>
      tool === "sep" ? (
        <Separator key={i} />
      ) : (
        <React.Fragment key={i}>
          <ToolButton $look={tool.look} disabled={tool.off} aria-label={tool.label}>
            <Icon name={tool.icon} />
          </ToolButton>
          {tool.drop && <DropButton $dim={tool.off} aria-label={`${tool.label}: Menü`} />}
        </React.Fragment>
      )
    )}
  </Group>
);

const DockHeader = ({ title }: { title: string }) => (
  <DockHead>
    <DockTitle>{title}</DockTitle>
    <DockButton aria-label="Abdocken">
      <svg viewBox="0 0 10 10" fill="none" stroke="#555"><path d="M2 4h4v4H2zM4 4V2h4v4H6" /></svg>
    </DockButton>
    <DockButton aria-label="Schließen">
      <svg viewBox="0 0 10 10" stroke="#444" strokeWidth="1.6"><path d="M2 2l6 6M8 2L2 8" /></svg>
    </DockButton>
  </DockHead>
);

const Small = ({ icon, label, disabled }: { icon: string; label: string; disabled?: boolean }) => (
  <SmallTool aria-label={label} disabled={disabled}>
    <Icon name={icon} size={28} />
  </SmallTool>
);

export default function App() {
  return (
    <Window>
      <GlobalStyle />
      <TitleBar>
        <Logo viewBox="0 0 40 44" aria-hidden="true">
          <ellipse cx="20" cy="21" rx="14.5" ry="15.5" fill="none" stroke="#7fb02c" strokeWidth="8" />
          <path d="M22 25l7-4 10 14v7h-7z" fill="#5ea03a" stroke="#fff" strokeWidth="1.5" />
          <path d="M16 16l8-2 3 4-4 6-6-2z" fill="#ee7b2f" />
          <path d="M21 22l4-4 4 4-4 5z" fill="#f5d23c" />
        </Logo>
        <WindowTitle>Unbenanntes Projekt - QGIS</WindowTitle>
      </TitleBar>
      <MenuBar>
        {menus.map(([pre, key, post]) => (
          <MenuItem key={pre + key + post}>
            {pre}
            <u>{key}</u>
            {post}
          </MenuItem>
        ))}
      </MenuBar>
      <Bar>{projectBar.map((g, i) => <ToolGroup key={i} tools={g} />)}</Bar>
      <Bar>{layerBar.map((g, i) => <ToolGroup key={i} tools={g} />)}</Bar>
      <Bar>
        <Group>
          <Grip />
          <ToolButton aria-label="Einrasten"><Icon name="magnet" /></ToolButton>
          <ToolButton disabled aria-label="Alle Layer"><Icon name="snapMode" /></ToolButton>
          <ToolButton disabled aria-label="Stützpunkt"><Icon name="snapVertex" /></ToolButton>
          <SpinBox>
            <SpinInput aria-label="Toleranz" defaultValue="12" />
            <SpinButtons>
              <SpinButton $up aria-label="Mehr" />
              <SpinButton aria-label="Weniger" />
            </SpinButtons>
          </SpinBox>
          <Combo>
            <ComboSelect aria-label="Einheit" defaultValue="px">
              <option value="px">px</option>
            </ComboSelect>
            <ComboArrow />
          </Combo>
          <ToolButton aria-label="Topologisches Bearbeiten"><Icon name="topo" /></ToolButton>
          <ToolButton disabled aria-label="Auf Schnittpunkt einrasten"><Icon name="snapCross" /></ToolButton>
          <ToolButton disabled aria-label="Spurverfolgung"><Icon name="tracing" /></ToolButton>
          <DropButton $dim aria-label="Spurverfolgung: Menü" />
        </Group>
      </Bar>
      <Bar>
        <Group>
          <Grip />
          {meshTools.map((m) => (
            <ToolButton key={m} aria-label={m}><Icon name={m} /></ToolButton>
          ))}
        </Group>
      </Bar>
      <Workspace>
        <Docks>
          <DockHeader title="Browser" />
          <DockBar>
            <Small icon="addItem" label="Layer hinzufügen" />
            <Small icon="refresh" label="Aktualisieren" />
            <Small icon="filter" label="Filter" />
            <Small icon="collapse" label="Alles zuklappen" />
            <Small icon="info" label="Eigenschaften" />
          </DockBar>
          <TreeBox>
            {tree.map(([icon, label, open]) => (
              <TreeRow key={label}>
                <Twisty $shown={open} aria-label={`${label} aufklappen`} />
                <Icon name={icon} size={40} />
                <TreeLabel>{label}</TreeLabel>
              </TreeRow>
            ))}
          </TreeBox>
          <HSplit />
          <DockHeader title="Layer" />
          <DockBar>
            <Small icon="styling" label="Layergestaltung" />
            <Small icon="addGroup" label="Gruppe hinzufügen" />
            <Small icon="eye" label="Kartenthemen" />
            <Small icon="filter" label="Legende filtern" />
            <Small icon="exprFilter" label="Nach Ausdruck filtern" disabled />
            <DropButton $dim aria-label="Ausdrucksfilter: Menü" />
            <Small icon="expand" label="Alles aufklappen" />
            <Small icon="collapse" label="Alles zuklappen" />
            <Small icon="removeItem" label="Layer entfernen" />
          </DockBar>
          <TreeBox $fill />
        </Docks>
        <VSplit />
        <Main>
          <PageTitle>Projektvorlagen</PageTitle>
          <Templates>
            <Card>
              <Thumb />
              <CardText>
                <CardTitle>Neues leeres Projekt</CardTitle>
                <CardSub>EPSG:4326 - WGS 84</CardSub>
              </CardText>
            </Card>
          </Templates>
        </Main>
      </Workspace>
      <Marker viewBox="0 0 583 128" aria-hidden="true">
        <ellipse cx="291" cy="64" rx="287" ry="61" fill="none" stroke="#f00" strokeWidth="5" />
      </Marker>
    </Window>
  );
}
